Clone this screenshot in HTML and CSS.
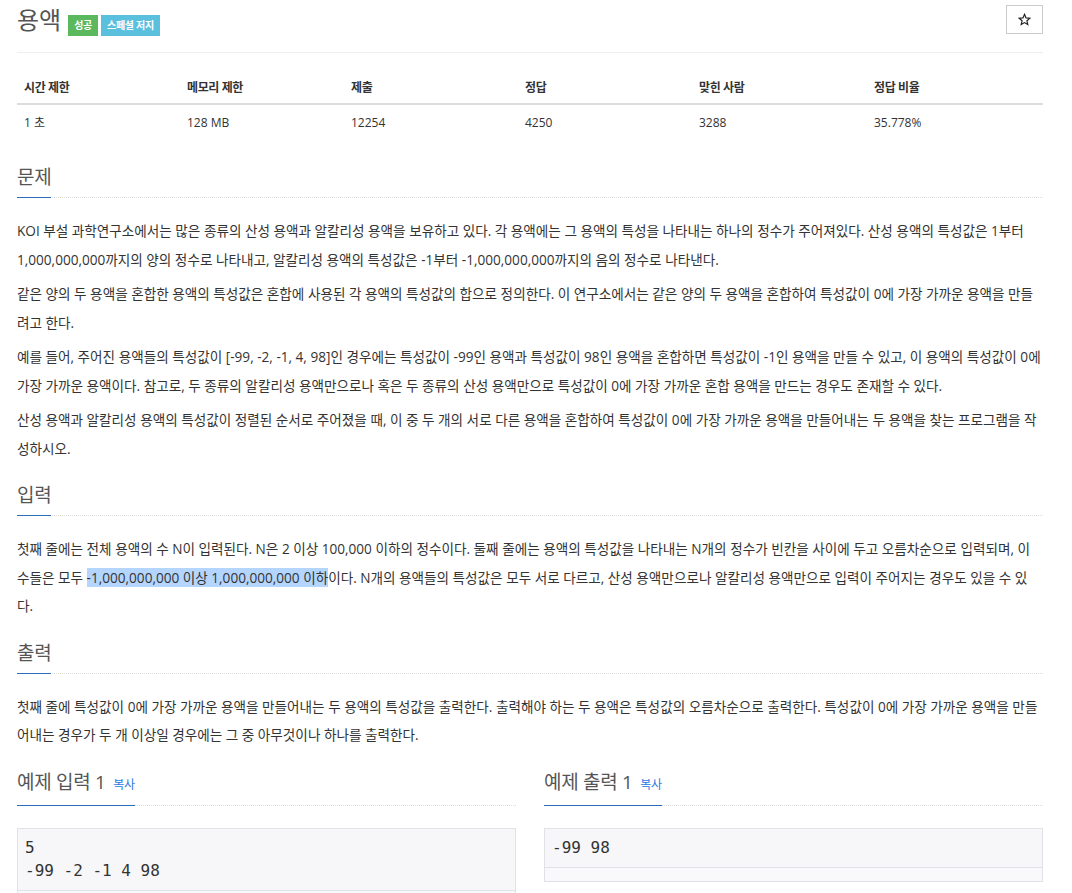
FILE: index.html
```html
<!DOCTYPE html>
<html lang="ko">
<head>
<meta charset="utf-8">
<title>용액</title>
<link rel="stylesheet" href="styles.css">
</head>
<body>
<div class="container">
  <div class="page-header">
    <div class="title-wrap">
      <h1 class="title">용액</h1>
      <span class="badge badge-success">성공</span>
      <span class="badge badge-info">스페셜 저지</span>
    </div>
    <button class="star-btn" type="button" aria-label="즐겨찾기">
      <svg width="13" height="13" viewBox="0 0 24 24" aria-hidden="true"><path d="M12 2.5l2.8 6.6 7.1.6-5.4 4.7 1.6 7-6.1-3.7-6.1 3.7 1.6-7-5.4-4.7 7.1-.6z" fill="none" stroke="#222" stroke-width="2.2" stroke-linejoin="miter"/></svg>
    </button>
  </div>

  <table class="info-table">
    <thead>
      <tr>
        <th class="c1">시간 제한</th>
        <th class="c2">메모리 제한</th>
        <th class="c3">제출</th>
        <th class="c4">정답</th>
        <th class="c5">맞힌 사람</th>
        <th class="c6">정답 비율</th>
      </tr>
    </thead>
    <tbody>
      <tr>
        <td>1 초</td>
        <td>128 MB</td>
        <td>12254</td>
        <td>4250</td>
        <td>3288</td>
        <td>35.778%</td>
      </tr>
    </tbody>
  </table>

  <section class="section">
    <div class="headline"><h2>문제</h2></div>
    <div class="text">
      <p>KOI 부설 과학연구소에서는 많은 종류의 산성 용액과 알칼리성 용액을 보유하고 있다. 각 용액에는 그 용액의 특성을 나타내는 하나의 정수가 주어져있다. 산성 용액의 특성값은 1부터 1,000,000,000까지의 양의 정수로 나타내고, 알칼리성 용액의 특성값은 -1부터 -1,000,000,000까지의 음의 정수로 나타낸다.</p>
      <p>같은 양의 두 용액을 혼합한 용액의 특성값은 혼합에 사용된 각 용액의 특성값의 합으로 정의한다. 이 연구소에서는 같은 양의 두 용액을 혼합하여 특성값이 0에 가장 가까운 용액을 만들려고 한다.</p>
      <p>예를 들어, 주어진 용액들의 특성값이 [-99, -2, -1, 4, 98]인 경우에는 특성값이 -99인 용액과 특성값이 98인 용액을 혼합하면 특성값이 -1인 용액을 만들 수 있고, 이 용액의 특성값이 0에 가장 가까운 용액이다. 참고로, 두 종류의 알칼리성 용액만으로나 혹은 두 종류의 산성 용액만으로 특성값이 0에 가장 가까운 혼합 용액을 만드는 경우도 존재할 수 있다.</p>
      <p>산성 용액과 알칼리성 용액의 특성값이 정렬된 순서로 주어졌을 때, 이 중 두 개의 서로 다른 용액을 혼합하여 특성값이 0에 가장 가까운 용액을 만들어내는 두 용액을 찾는 프로그램을 작성하시오.</p>
    </div>
  </section>

  <section class="section">
    <div class="headline"><h2>입력</h2></div>
    <div class="text">
      <p>첫째 줄에는 전체 용액의 수 N이 입력된다. N은 2 이상 100,000 이하의 정수이다. 둘째 줄에는 용액의 특성값을 나타내는 N개의 정수가 빈칸을 사이에 두고 오름차순으로 입력되며, 이 수들은 모두 <span class="selected">-1,000,000,000 이상 1,000,000,000 이하</span>이다. N개의 용액들의 특성값은 모두 서로 다르고, 산성 용액만으로나 알칼리성 용액만으로 입력이 주어지는 경우도 있을 수 있다.</p>
    </div>
  </section>

  <section class="section">
    <div class="headline"><h2>출력</h2></div>
    <div class="text">
      <p>첫째 줄에 특성값이 0에 가장 가까운 용액을 만들어내는 두 용액의 특성값을 출력한다. 출력해야 하는 두 용액은 특성값의 오름차순으로 출력한다. 특성값이 0에 가장 가까운 용액을 만들어내는 경우가 두 개 이상일 경우에는 그 중 아무것이나 하나를 출력한다.</p>
    </div>
  </section>

  <div class="samples">
    <section class="sample">
      <div class="headline"><h2>예제 입력 1 <a class="copy" href="#">복사</a></h2></div>
      <div class="sample-box">
        <pre class="sample-data">5
-99 -2 -1 4 98</pre>
        <div class="sample-strip"></div>
      </div>
    </section>
    <section class="sample">
      <div class="headline"><h2>예제 출력 1 <a class="copy" href="#">복사</a></h2></div>
      <div class="sample-box">
        <pre class="sample-data">-99 98</pre>
        <div class="sample-strip"></div>
      </div>
    </section>
  </div>
</div>
</body>
</html>
```

FILE: styles.css
```css
* { box-sizing: border-box; }

body {
  margin: 0;
  background: #fff;
  color: #333;
  font-family: "Open Sans", "Noto Sans CJK KR", sans-serif;
  font-size: 14px;
}

.container {
  width: 1026px;
  margin-left: 17px;
}

/* header */
.page-header {
  display: flex;
  justify-content: space-between;
  align-items: flex-start;
  padding-bottom: 12px;
  border-bottom: 1px solid #eee;
}

.title-wrap {
  display: flex;
  align-items: flex-start;
}

.title {
  margin: 0;
  font-size: 24px;
  line-height: 40px;
  font-weight: 400;
  color: #555;
}

.badge {
  display: inline-block;
  margin-top: 15px;
  height: 21px;
  padding: 0 6px;
  font-size: 10px;
  line-height: 21px;
  font-weight: 700;
  color: #fff;
  letter-spacing: -0.3px;
}

.title + .badge { margin-left: 7px; }
.badge + .badge { margin-left: 3px; }

.badge-success { background: #5cb85c; }
.badge-info { background: #5bc0de; }

.star-btn {
  display: flex;
  align-items: center;
  justify-content: center;
  margin-top: 5px;
  width: 37px;
  height: 29px;
  padding: 0;
  border: 1px solid #ccc;
  background: #fff;
  cursor: pointer;
}

/* info table */
.info-table {
  width: 100%;
  margin-top: 18px;
  border-collapse: collapse;
  font-size: 12px;
}

.info-table th,
.info-table td {
  text-align: left;
  padding: 0 7px;
  height: 33px;
  vertical-align: middle;
}

.info-table th {
  font-weight: 700;
  color: #333;
  letter-spacing: -0.4px;
  border-bottom: 2px solid #ddd;
}

.info-table td { height: 35px; }

.c1 { width: 163px; }
.c2 { width: 164px; }
.c3 { width: 174px; }
.c4 { width: 174px; }
.c5 { width: 175px; }

/* sections */
.section { margin-top: 17px; }
.info-table + .section { margin-top: 23px; }

.headline {
  border-bottom: 1px dotted #ddd;
}

.headline h2 {
  display: inline-block;
  margin: 0 0 -1px;
  padding-bottom: 5px;
  border-bottom: 1px solid #2a6ebb;
  font-size: 19px;
  line-height: 30px;
  font-weight: 400;
  color: #555;
  letter-spacing: -0.3px;
}

.text {
  padding-top: 19px;
}

.text p {
  margin: 0 0 6px;
  font-size: 13.6px;
  line-height: 28.5px;
  color: #333;
}

.text p:last-child { margin-bottom: 0; }

.selected { background: #b4d5fe; }

/* samples */
.samples {
  display: grid;
  grid-template-columns: 1fr 1fr;
  column-gap: 28px;
  margin-top: 17px;
}

.copy {
  margin-left: 3px;
  font-size: 12px;
  color: #2a7ae2;
  text-decoration: none;
}

.sample-box {
  margin-top: 22px;
  border: 1px solid #e1e1e8;
  background: #f7f7f9;
}

.sample-data {
  margin: 0;
  padding: 7px 7px 8px;
  font-family: "DejaVu Sans Mono", monospace;
  font-size: 16px;
  line-height: 23px;
  color: #333;
}

.sample-strip {
  height: 14px;
  border-top: 1px solid #e1e1e8;
  background: #f9f9fb;
}
```
